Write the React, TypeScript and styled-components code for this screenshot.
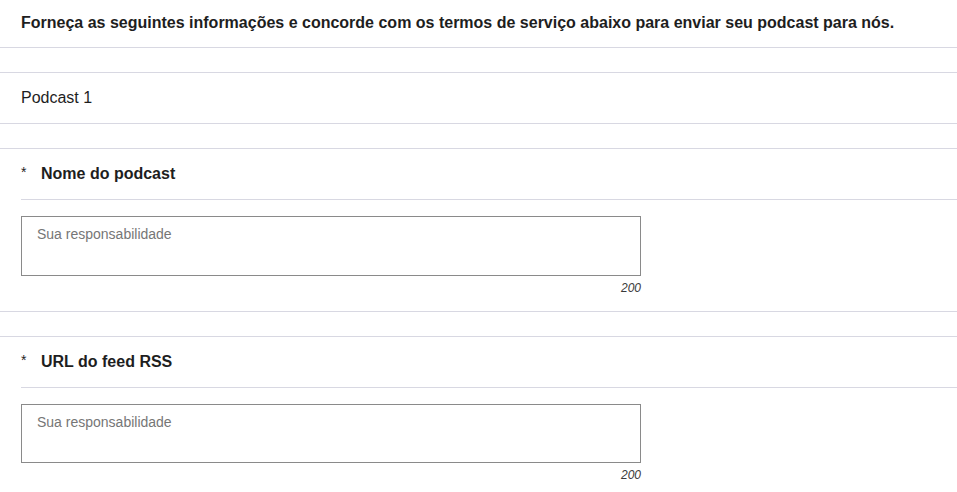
import React from "react";
import styled, { createGlobalStyle } from "styled-components";

const Global = createGlobalStyle`
  html, body { margin: 0; padding: 0; background: #ffffff; }
  body { font-family: "Liberation Sans", Arial, sans-serif; color: #1e1e1e; }
  * { box-sizing: border-box; }
`;

const LINE = "#d8d8e2";

const Page = styled.div`
  display: flex;
  flex-direction: column;
  width: 957px;
`;

const Intro = styled.div`
  height: 48px;
  padding: 0 21px 2px;
  display: flex;
  align-items: center;
  border-bottom: 1px solid ${LINE};
  font-size: 16px;
  font-weight: 700;
  color: #1e1e1e;
  white-space: nowrap;
`;

const Spacer = styled.div`
  height: 25px;
  border-bottom: 1px solid ${LINE};
`;

const Title = styled.div`
  height: 51px;
  padding: 0 21px 1px;
  display: flex;
  align-items: center;
  border-bottom: 1px solid ${LINE};
  font-size: 16px;
  color: #1e1e1e;
`;

const Question = styled.div`
  display: flex;
  flex-direction: column;
  border-bottom: 1px solid ${LINE};
`;

const LabelRow = styled.div`
  margin-left: 21px;
  height: 51px;
  display: flex;
  align-items: center;
  border-bottom: 1px solid ${LINE};
  padding-bottom: 1px;
`;

const Star = styled.span`
  width: 20px;
  font-size: 14px;
  color: #1e1e1e;
  align-self: center;
  margin-top: -3px;
`;

const Label = styled.span`
  font-size: 16px;
  font-weight: 700;
  color: #1e1e1e;
`;

const Field = styled.div`
  padding: 16px 0 11px 21px;
  width: 641px;
  display: flex;
  flex-direction: column;
`;

const Area = styled.textarea<{ $h: number }>`
  width: 620px;
  height: ${(p) => p.$h}px;
  border: 1px solid #8a8a8a;
  border-radius: 0;
  padding: 9px 15px;
  margin: 0;
  resize: none;
  font-family: "Liberation Sans", Arial, sans-serif;
  font-size: 14px;
  color: #1e1e1e;
  outline: none;
  &::placeholder { color: #767676; }
`;

const Counter = styled.div`
  height: 24px;
  width: 620px;
  display: flex;
  align-items: center;
  justify-content: flex-end;
  font-size: 12px;
  font-style: italic;
  color: #3a3a3a;
`;

const questions = [
  { label: "Nome do podcast", h: 60 },
  { label: "URL do feed RSS", h: 59 },
];

export default function App() {
  return (
    <Page>
      <Global />
      <Intro>
        Forneça as seguintes informações e concorde com os termos de serviço abaixo para enviar seu podcast para nós.
      </Intro>
      <Spacer />
      <Title>Podcast 1</Title>
      {questions.map((q) => (
        <React.Fragment key={q.label}>
          <Spacer />
          <Question>
            <LabelRow>
              <Star>*</Star>
              <Label>{q.label}</Label>
            </LabelRow>
            <Field>
              <Area $h={q.h} placeholder="Sua responsabilidade" />
              <Counter>200</Counter>
            </Field>
          </Question>
        </React.Fragment>
      ))}
    </Page>
  );
}
